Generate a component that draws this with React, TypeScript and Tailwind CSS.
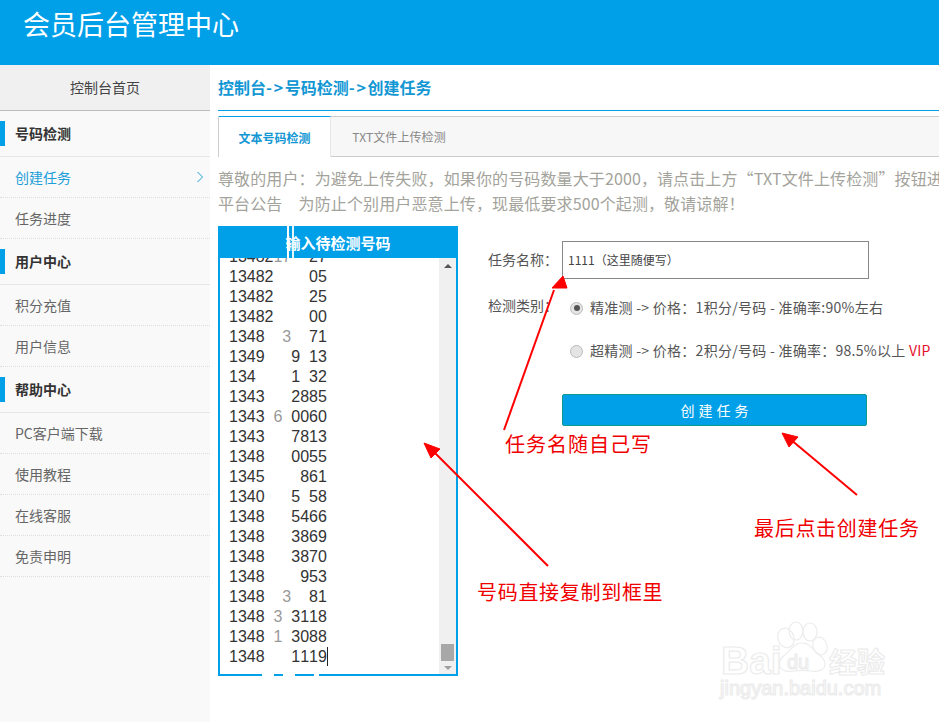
const numbers = [
  '1348217  27',
  '13482    05',
  '13482    25',
  '13482    00',
  '1348  3  71',
  '1349   9 13',
  '134    1 32',
  '1343   2885',
  '1343 6 0060',
  '1343   7813',
  '1348   0055',
  '1345    861',
  '1340   5 58',
  '1348   5466',
  '1348   3869',
  '1348   3870',
  '1348    953',
  '1348  3  81',
  '1348 3 3118',
  '1348 1 3088',
  '1348   1119',
];

function NavHead({ label }: { label: string }) {
  return (
    <div className="h-[46px] flex items-center border-b border-[#e6e6e6] relative pl-[15px] pb-[2px] text-sm font-bold text-[#333]">
      <span className="absolute left-0 top-[10px] h-[25px] w-[5px] bg-[#00a0e9]" />
      {label}
    </div>
  );
}

function NavItem({ label, active }: { label: string; active?: boolean }) {
  return (
    <div
      className={`h-[41px] flex items-center justify-between pl-[15px] pr-[6px] text-sm border-b border-dotted border-[#dedede] ${
        active ? 'text-[#1d9ed8]' : 'text-[#666]'
      }`}
    >
      {label}
      {active && (
        <svg width="8" height="12" viewBox="0 0 8 12" fill="none" stroke="#1d9ed8" strokeWidth="1">
          <path d="M1.5 1l5 5-5 5" />
        </svg>
      )}
    </div>
  );
}

function Sidebar() {
  return (
    <aside className="w-[210px] shrink-0 bg-[#f9f9f9]">
      <div className="h-[46px] flex items-center justify-center pb-[2px] bg-[#f0f0f0] border-b border-[#bbb] text-sm text-[#444]">
        控制台首页
      </div>
      <NavHead label="号码检测" />
      <NavItem label="创建任务" active />
      <NavItem label="任务进度" />
      <NavHead label="用户中心" />
      <NavItem label="积分充值" />
      <NavItem label="用户信息" />
      <NavHead label="帮助中心" />
      <NavItem label="PC客户端下载" />
      <NavItem label="使用教程" />
      <NavItem label="在线客服" />
      <NavItem label="免责申明" />
    </aside>
  );
}

function NumberRow({ value, caret }: { value: string; caret?: boolean }) {
  return (
    <div className="h-5 leading-5 flex whitespace-pre">
      {value.split('').map((c, i) => (
        <span key={i} className={`w-[8.9px] text-center ${i > 4 && i < 7 ? 'opacity-50' : ''}`}>
          {c}
        </span>
      ))}
      {caret && <span className="w-px h-[19px] bg-[#222]" />}
    </div>
  );
}

function NumberBox() {
  return (
    <div className="relative w-[240px] h-[450px] shrink-0 border-2 border-[#00a0e9] flex flex-col">
      <div className="h-[30px] shrink-0 bg-[#00a0e9] text-white text-[15px] font-bold flex items-center justify-center">
        输入待检测号码
      </div>
      <div className="flex-1 flex min-h-0">
        <div className="flex-1 overflow-hidden pl-[9px] text-base text-[#333] font-['Liberation_Sans',sans-serif]">
          <div className="-mt-[11px]">
            {numbers.map((n, i) => (
              <NumberRow key={i} value={n} caret={i === numbers.length - 1} />
            ))}
          </div>
        </div>
        <div className="w-[17px] bg-[#f0f0f0] flex flex-col items-center justify-between pt-[6px] pb-[4px]">
          <span className="w-0 h-0 border-x-[4px] border-x-transparent border-b-[4px] border-b-[#555]" />
          <div className="flex flex-col items-center gap-[5px]">
            <span className="w-[13px] h-[17px] bg-[#a8a8a8]" />
            <span className="w-0 h-0 border-x-[4px] border-x-transparent border-t-[4px] border-t-[#a0a0a0]" />
          </div>
        </div>
      </div>
      <span className="absolute left-[67px] -top-[2px] h-[32px] w-[2px] bg-white" />
      <span className="absolute left-[72px] -top-[2px] h-[32px] w-[2px] bg-[#e8f6fd]" />
      <span className="absolute left-[42px] -bottom-[2px] h-[2px] w-[12px] bg-white" />
      <span className="absolute left-[63px] -bottom-[2px] h-[2px] w-[12px] bg-white" />
      <span className="absolute left-[94px] -bottom-[2px] h-[2px] w-[5px] bg-white" />
    </div>
  );
}

function Radio({ checked }: { checked?: boolean }) {
  return (
    <span className="w-[13px] h-[13px] rounded-full border border-[#bbb] bg-[#e4e4e4] flex items-center justify-center shrink-0">
      {checked && <span className="w-[6px] h-[6px] rounded-full bg-[#555]" />}
    </span>
  );
}

function TaskForm() {
  return (
    <div className="flex-1 pl-[30px] pt-[15px] text-sm text-[#555] whitespace-nowrap">
      <div className="flex items-center">
        <span className="w-[74px] pb-[3px]">任务名称：</span>
        <div className="w-[307px] h-[38px] border border-[#888] flex items-center pl-[5px] text-xs text-[#444]">
          1111（这里随便写）
        </div>
      </div>
      <div className="flex mt-[18px]">
        <span className="w-[74px] -mt-[2px]">检测类别：</span>
        <div className="flex flex-col gap-[23px] pl-[8px] pt-[1px] tracking-[0.27px]">
          <div className="h-5 flex items-center gap-[7px]">
            <Radio checked />
            <span className="pb-[2px]">精准测 -&gt; 价格：1积分/号码 - 准确率:90%左右</span>
          </div>
          <div className="h-5 flex items-center gap-[7px]">
            <Radio />
            <span className="pb-[2px]">
              超精测 -&gt; 价格：2积分/号码 - 准确率：98.5%以上 <span className="text-[#e8102a]">VIP</span>
            </span>
          </div>
        </div>
      </div>
      <div className="ml-[74px] mt-[33px] w-[305px] h-[32px] pl-[4px] bg-[#00a0e9] border border-[#0f9a8e] rounded-[2px] flex items-center justify-center text-sm text-white tracking-[4px]">
        创建任务
      </div>
    </div>
  );
}

function Annotations() {
  return (
    <div className="absolute inset-0 pointer-events-none">
      <svg className="absolute inset-0" width="939" height="722" viewBox="0 0 939 722" fill="#ff0000" stroke="#ff0000">
        <path d="M504 430L554 290" strokeWidth="2" />
        <path d="M563 276L552 288 567 288Z" strokeWidth="1" />
        <path d="M548 566L432 450" strokeWidth="2" />
        <path d="M424 443L431 458 440 449Z" strokeWidth="1" />
        <path d="M857 495L790 439" strokeWidth="2" />
        <path d="M782 433L789 447 798 437Z" strokeWidth="1" />
        <g fill="none" stroke="#ececec" strokeWidth="1.2">
          <text x="721" y="674" fontSize="39" fontFamily="Liberation Sans, sans-serif" fontWeight="700">
            Bai
          </text>
          <text x="829" y="673" fontSize="28" fontFamily="Noto Sans CJK SC, sans-serif" fontWeight="700">
            经验
          </text>
          <text x="720" y="695" fontSize="20" fontFamily="Liberation Sans, sans-serif">
            jingyan.baidu.com
          </text>
          <text x="787" y="669" fontSize="20" fontFamily="Liberation Sans, sans-serif">
            du
          </text>
          <ellipse cx="786" cy="638" rx="8" ry="10" transform="rotate(-20 786 638)" />
          <ellipse cx="796" cy="631" rx="7" ry="9" />
          <ellipse cx="810" cy="632" rx="7" ry="9" />
          <ellipse cx="820" cy="646" rx="7" ry="9" transform="rotate(-20 820 646)" />
          <path d="M802 643c-8 0-11 7-16 11-6 4-8 8-6 13 2 4 8 5 14 4 6-1 11-1 17 0 6 1 13 0 14-6 1-5-4-9-8-12-5-4-7-10-15-10z" />
        </g>
      </svg>
      <span className="absolute left-[505px] top-[429px] text-xl leading-[30px] tracking-[1px] text-[#f00000]">
        任务名随自己写
      </span>
      <span className="absolute left-[477px] top-[577px] text-xl leading-[30px] tracking-[0.7px] text-[#f00000]">
        号码直接复制到框里
      </span>
      <span className="absolute left-[754px] top-[513px] text-xl leading-[30px] tracking-[0.7px] text-[#f00000]">
        最后点击创建任务
      </span>
    </div>
  );
}

export default function App() {
  return (
    <div className="relative w-[939px] h-[722px] overflow-hidden bg-white font-['Noto_Sans_CJK_SC',sans-serif]">
      <header className="h-[65px] bg-[#00a0e9] pl-[23px] pt-[5px] text-[27px] leading-[38px] text-white">
        会员后台管理中心
      </header>
      <div className="flex h-[657px]">
        <Sidebar />
        <main className="flex-1 min-w-0 pl-2 overflow-hidden">
          <h1 className="h-[46px] flex items-center pb-[2px] border-b border-[#00a0e9] text-base font-bold text-[#1297d4]">
            控制台<span className="tracking-[1.7px]">-&gt;</span>号码检测<span className="tracking-[1.7px]">-&gt;</span>创建任务
          </h1>
          <div className="mt-[5px] h-[41px] flex bg-[#f7f7f7] border border-[#ccc] border-r-0 text-xs">
            <div className="w-[112px] -mt-px h-[41px] pt-[2px] bg-white border-t border-t-[#00a0e9] border-r border-r-[#e8e8e8] flex items-center justify-center font-bold text-[#1297d4]">
              文本号码检测
            </div>
            <div className="w-[136px] flex items-center justify-center tracking-[0.1px] text-[#888]">TXT文件上传检测</div>
          </div>
          <div className="mt-[9px] h-[50px] text-base leading-[25px] tracking-[0.12px] text-[#a3a39b] whitespace-nowrap">
            <p>尊敬的用户：为避免上传失败，如果你的号码数量大于2000，请点击上方“TXT文件上传检测”按钮进行上传</p>
            <p>平台公告　为防止个别用户恶意上传，现最低要求500个起测，敬请谅解！</p>
          </div>
          <div className="mt-[10px] flex">
            <NumberBox />
            <TaskForm />
          </div>
        </main>
      </div>
      <Annotations />
    </div>
  );
}
